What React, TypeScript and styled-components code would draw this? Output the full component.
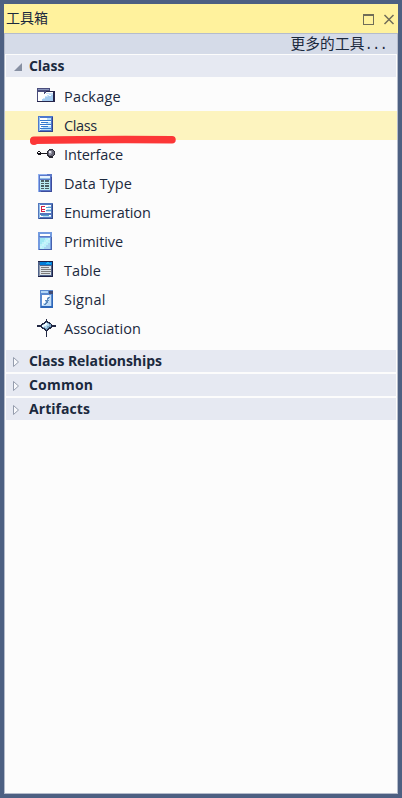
import React from 'react';
import styled, { createGlobalStyle } from 'styled-components';

const GlobalStyle = createGlobalStyle`
  * { box-sizing: border-box; }
  body { margin: 0; background: #4d6082; }
`;

const Frame = styled.main`
  height: 798px;
  padding: 4px;
  background: #4d6082;
  color: #1b293e;
  font-family: "Open Sans", "Noto Sans", "Noto Sans CJK SC", sans-serif;
`;
const Panel = styled.section`
  height: 790px;
  display: flex;
  flex-direction: column;
`;
const TitleBar = styled.header`
  height: 29px;
  padding: 0 3px 0 2px;
  display: flex;
  align-items: center;
  justify-content: space-between;
  background: #fff29d;
  font: 14px/28px "Noto Sans CJK SC", sans-serif;
`;
const Title = styled.span`
  height: 29px;
  line-height: 27px;
`;
const WindowButtons = styled.div`
  display: flex;
  gap: 9px;
`;
const WindowIcon = styled.svg`
  width: 12px;
  height: 12px;
  fill: none;
  stroke: #706d58;
`;
const Content = styled.div`
  flex: 1;
  border: 1px solid #b5bccb;
  background: #fcfcfc;
`;
const MoreTools = styled.div`
  height: 21px;
  padding-right: 10px;
  border-bottom: 1px solid #fcfcfc;
  background: #d5dbe8;
  text-align: right;
  font: 14.7px/17px "Noto Sans CJK SC", sans-serif;
  letter-spacing: 0.1px;
`;
const Dots = styled.span`
  font-family: "Liberation Mono", monospace;
  font-size: 14px;
  letter-spacing: -0.9px;
`;
const GroupHeader = styled.div<{ $first?: boolean }>`
  height: 22px;
  margin: 0 1px ${p => (p.$first ? 0 : 2)}px;
  padding-left: 7px;
  display: flex;
  align-items: center;
  background: #e6e9f2;
`;
const Arrow = styled.svg`
  width: 10px;
  height: 10px;
  margin: 2px 6px 0 0;
`;
const GroupLabel = styled.span<{ $spacing: number }>`
  font-size: 14px;
  line-height: 20px;
  font-weight: 700;
  letter-spacing: ${p => p.$spacing}px;
  white-space: nowrap;
`;
const ToolList = styled.div`
  padding: 5px 0 7px;
`;
const ToolRow = styled.div<{ $selected?: boolean }>`
  position: relative;
  height: 29px;
  padding-left: 31px;
  display: flex;
  align-items: center;
  background: ${p => (p.$selected ? '#fdf4bf' : 'transparent')};
`;
const ToolIcon = styled.svg`
  width: 20px;
  height: 20px;
  margin: 1px 8px 0 0;
`;
const ToolLabel = styled.span<{ $spacing: number }>`
  font-size: 14.5px;
  line-height: 20px;
  letter-spacing: ${p => p.$spacing}px;
  padding-top: 1px;
  white-space: nowrap;
`;
const Marker = styled.svg`
  position: absolute;
  z-index: 1;
  left: 25px;
  top: 23px;
  width: 150px;
  height: 12px;
`;

const icons: Record<string, React.ReactNode> = {
  Package: (
    <>
      <path fill="#4a4d7c" d="M1 1h13v3h5v11H1z" />
      <path fill="#8995bd" d="M2 2h11v1H2z" />
      <path fill="#fff" d="M2 5h6v2H2zM2 7h6l2-2h7v9H2z" />
      <path fill="#c8e2fb" d="M10 6h7v2h-4v2h-3v2H7v-1h2V9h2V8h2V7h-3z" />
      <path fill="#a3cbf1" d="M6 14v-2h3v-2h3V9h3V8h2v6z" />
      <path fill="#25254b" d="M10 4h9v11H1v-1h16V5h-7z" />
    </>
  ),
  Class: (
    <>
      <path fill="#4d78ce" d="M2 0h15v16H2z" />
      <path fill="#92c2f2" d="M3 1h1v14H3z" />
      <path fill="#fff" d="M4 2h11v12H4z" />
      <path fill="#b9dffa" d="M11 2h4v2h-4zM10 6h5v2h-5zM7 10h8v2H7zM5 13h10v1H5z" />
      <path fill="#3679cf" d="M4 4h11v1H4zM5 6h7v1H5zM4 8h11v1H4zM5 10h7v1H5zM4 12h11v1H4z" />
      <path fill="#34438c" d="M16 1h1v15H3v-1h13z" />
    </>
  ),
  Interface: (
    <>
      <path fill="#16151c" d="M2 6h2v1h1v1h6v1H5v1H2V9H1V7h1z" />
      <path fill="#fff" d="M2 7h2v1H2z" />
      <path fill="#292832" d="M13 4h4v1h1v1h1v4h-1v1h-1v2h-4v-1h-1v-1h-1V6h1V5h1z" />
      <path fill="#666574" d="M13 5h4v1h1v4h-1v1h-4v-1h-1V6h1z" />
      <path fill="#999aaa" d="M13 6h3v3h-1v1h-2z" />
      <path fill="#e7e7ef" d="M13 6h2v2h-2z" />
    </>
  ),
  'Data Type': (
    <>
      <path fill="#5b78c8" d="M2 0h14v18H2z" />
      <path fill="#8fb0f0" d="M2 0h9v1H3v17H2z" />
      <path fill="#e8f3ff" d="M4 2h10v2H4z" />
      <path fill="#8fbce8" d="M4 4h10v1H4z" />
      <path fill="#b9edf0" d="M4 6h10v10H4z" />
      <path fill="#4b6060" d="M5 6h3v2H5zM9 6h4v2H9zM5 9h3v1H5zM9 9h4v1H9zM5 11h3v2H5zM9 11h4v2H9zM5 14h3v1H5zM9 14h4v1H9z" />
      <path fill="#3d4c9c" d="M15 3h1v15H5v-1h10z" />
    </>
  ),
  Enumeration: (
    <>
      <path fill="#5276bd" d="M2 0h15v16H2z" />
      <path fill="#93bce6" d="M3 1h1v14H3z" />
      <path fill="#fff" d="M4 2h11v8H4zM4 12h11v2H4z" />
      <path fill="#d22246" d="M5 3h4v1H6v2h3v1H6v1h3v1H5z" />
      <path fill="#559fce" d="M10 4h5v1h-5zM10 7h5v1h-5zM5 12h8v1H5z" />
      <path fill="#b9e0fa" d="M12 3h3v1h-3zM11 6h4v1h-4zM10 8h5v1h-5zM7 13h8v1H7z" />
      <path fill="#334b8d" d="M16 1h1v15H3v-1h13z" />
    </>
  ),
  Primitive: (
    <>
      <path fill="#739be0" d="M2 0h14v18H2z" />
      <path fill="#fff" d="M4 2h10v2H4z" />
      <path fill="#5c7cc5" d="M3 4h12v1H3z" />
      <path fill="#b8f2f9" d="M4 6h10v11H4z" />
      <path fill="#9ee7f2" d="M4 6h5v2H8v2H6v2H4z" />
      <path fill="#a9d5f0" d="M14 11v6H8v-2h2v-2h2v-2z" />
      <path fill="#c9f4fb" d="M12 6h2v2h-2v2h-2v2H8v2H6v2H4v-2h2v-2h2v-2h2V8h2z" />
      <path fill="#4862ae" d="M15 5h1v13H3v-1h12z" />
    </>
  ),
  Table: (
    <>
      <path fill="#4e6289" d="M2 0h15v16H2z" />
      <path fill="#8c96aa" d="M3 4h1v11H3z" />
      <path fill="#007cd8" d="M4 1h12v3H4z" />
      <path fill="#20b4f7" d="M11 1h2v1h2v1h-5V2h1z" />
      <path fill="#dce3e8" d="M4 5h11v9H4z" />
      <path fill="#7b7b7b" d="M5 6h8v1H5zM5 8h10v1H5zM5 10h10v1H5zM5 12h9v1H5z" />
      <path fill="#1d2147" d="M2 0h15v1H2zM16 1h1v15H2v-1h14z" />
    </>
  ),
  Signal: (
    <>
      <path fill="#5b8bd0" d="M4 0h13v18H4z" />
      <path fill="#b5d8f5" d="M5 1h7v2H5z" />
      <path fill="#424c74" d="M13 1h4v3h-4z" />
      <path fill="#c0ddf7" d="M6 5h9v11H6z" />
      <path fill="#fff" d="M6 5h7v2h-2v3H9v3H7v2H6z" />
      <path fill="#5d8bbd" d="M12 7h2v1h-1v1h-1v1h1v1h-1v2h-1v1h-1v1H8v-1h1v-1h1v-2H9v-1h2V8h1z" />
      <path fill="#2d67b8" d="M16 4h1v14H5v-2h11z" />
    </>
  ),
  Association: (
    <>
      <path fill="#222843" d="M10 0h1v2h1v1h2v1h1v1h1v1h4v2h-4v1h-1v1h-2v1h-1v1h-1v6h-1v-6H9v-1H8v-1H6V9H5V8H1V6h4V5h1V4h2V3h1V2h1z" />
      <path fill="#7da8c6" d="M10 3h1v1h2v1h2v3h-2v1h-1v1h-1v1h-1v-1H9V9H7V8H6V6h1V5h2V4h1z" />
      <path fill="#b5d9ee" d="M9 4h3v1h1v2h-2v2H9V8H7V6h2z" />
      <path fill="#edf9ff" d="M9 4h2v2h-1v1H8v1H6V6h2V5h1z" />
    </>
  ),
};

const tools = [
  { label: 'Package', spacing: 0.2 },
  { label: 'Class', spacing: -0.4 },
  { label: 'Interface', spacing: -0.12 },
  { label: 'Data Type', spacing: 0 },
  { label: 'Enumeration', spacing: -0.1 },
  { label: 'Primitive', spacing: -0.05 },
  { label: 'Table', spacing: 0.06 },
  { label: 'Signal', spacing: 0.25 },
  { label: 'Association', spacing: 0 },
];
const groups = [
  { label: 'Class Relationships', spacing: -0.05 },
  { label: 'Common', spacing: 0.2 },
  { label: 'Artifacts', spacing: 0.06 },
];

export default function App() {
  return (
    <>
      <GlobalStyle />
      <Frame>
        <Panel>
          <TitleBar>
            <Title>工具箱</Title>
            <WindowButtons>
              <WindowIcon viewBox="0 0 12 12" shapeRendering="crispEdges">
                <path d="M1.5 1v10.5h10V1M1 1.5h11M1 2.5h11" />
              </WindowIcon>
              <WindowIcon viewBox="0 0 12 12">
                <path strokeWidth="1.5" d="m1.5 2 9 9m0-9-9 9" />
              </WindowIcon>
            </WindowButtons>
          </TitleBar>
          <Content>
            <MoreTools>更多的工具<Dots>...</Dots></MoreTools>
            <GroupHeader $first>
              <Arrow viewBox="0 0 10 10"><path fill="#8790a3" d="M9 1v8H1z" /></Arrow>
              <GroupLabel $spacing={-0.05}>Class</GroupLabel>
            </GroupHeader>
            <ToolList>
              {tools.map(({ label, spacing }) => (
                <ToolRow key={label} $selected={label === 'Class'}>
                  <ToolIcon viewBox="0 0 20 20" shapeRendering="crispEdges">{icons[label]}</ToolIcon>
                  <ToolLabel $spacing={spacing}>{label}</ToolLabel>
                  {label === 'Class' && (
                    <Marker viewBox="0 0 150 12">
                      <path d="M4 6.2q68-1 138-.5" fill="none" stroke="#fc3737" strokeWidth="7.5" strokeLinecap="round" />
                      <circle cx="4" cy="7" r="4" fill="#fc3737" />
                    </Marker>
                  )}
                </ToolRow>
              ))}
            </ToolList>
            {groups.map(({ label, spacing }) => (
              <GroupHeader key={label}>
                <Arrow viewBox="0 0 10 10"><path fill="#f8f9fc" stroke="#959dad" d="M.5.5v9L5.5 5z" /></Arrow>
                <GroupLabel $spacing={spacing}>{label}</GroupLabel>
              </GroupHeader>
            ))}
          </Content>
        </Panel>
      </Frame>
    </>
  );
}
